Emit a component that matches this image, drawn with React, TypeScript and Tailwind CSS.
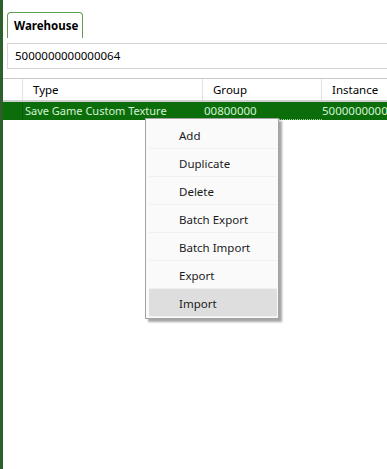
const menuItems = [
  "Add",
  "Duplicate",
  "Delete",
  "Batch Export",
  "Batch Import",
  "Export",
  "Import",
];

export default function App() {
  return (
    <div className="relative flex h-[469px] w-[387px] overflow-hidden bg-white font-['Noto_Sans',sans-serif] text-[11px] text-[#1a1a1a]">
      <div className="w-[3px] shrink-0 bg-[#2c5f29]" />

      <div className="flex min-w-0 flex-1 flex-col">
        <div className="pl-[4px] pt-[12px]">
          <div className="flex h-[26px] w-[76px] items-center rounded-t-[4px] border border-b-0 border-[#5e9f52] pl-[6px] text-[11.5px] font-bold text-black">
            Warehouse
          </div>
        </div>

        <div className="ml-[4px] mt-[5px] flex h-[26px] w-[420px] items-center border border-[#d6d6d6] pl-[7px] text-[11.5px] text-black">
          5000000000000064
        </div>

        <div className="mt-[9px] border-t border-[#c9c9c9]">
          <div className="flex h-[23px] items-center border-b-2 border-[#cfcfcf] text-[11.5px] text-black">
            <div className="h-full w-[20px] shrink-0 border-r border-[#e2e2e2]" />
            <div className="flex h-full w-[180px] shrink-0 items-center border-r border-[#e2e2e2] pl-[10px]">
              Type
            </div>
            <div className="flex h-full w-[119px] shrink-0 items-center border-r border-[#e2e2e2] pl-[10px]">
              Group
            </div>
            <div className="flex h-full items-center pl-[10px]">Instance</div>
          </div>

          <div className="flex h-[18px] items-center whitespace-nowrap bg-[#0b6e0b] text-[11.5px] text-[#d4f2d4]">
            <div className="h-full w-[20px] shrink-0 border-r border-[#0a5a0a]" />
            <div className="w-[180px] shrink-0 pl-[2px] text-[11px]">Save Game Custom Texture</div>
            <div className="flex h-full w-[119px] shrink-0 items-center border-b border-dotted border-[#9fd09f] pl-[1px]">
              00800000
            </div>
            <div>5000000000000064</div>
          </div>
        </div>
      </div>

      <div className="absolute left-[145px] top-[118px] w-[134px] border border-[#a3a3a3] bg-[#fafafa] pb-[1px] pt-[2px] text-[11.5px] shadow-[3px_3px_2px_rgba(0,0,0,0.35)]">
        {menuItems.map((item) => (
          <div
            key={item}
            className={`ml-[3px] mr-[1px] flex h-[28px] items-center border-b border-[#f0f0f0] pl-[30px] pt-[2px] ${
              item === "Import" ? "bg-[#dedede]" : ""
            }`}
          >
            {item}
          </div>
        ))}
      </div>
    </div>
  );
}
